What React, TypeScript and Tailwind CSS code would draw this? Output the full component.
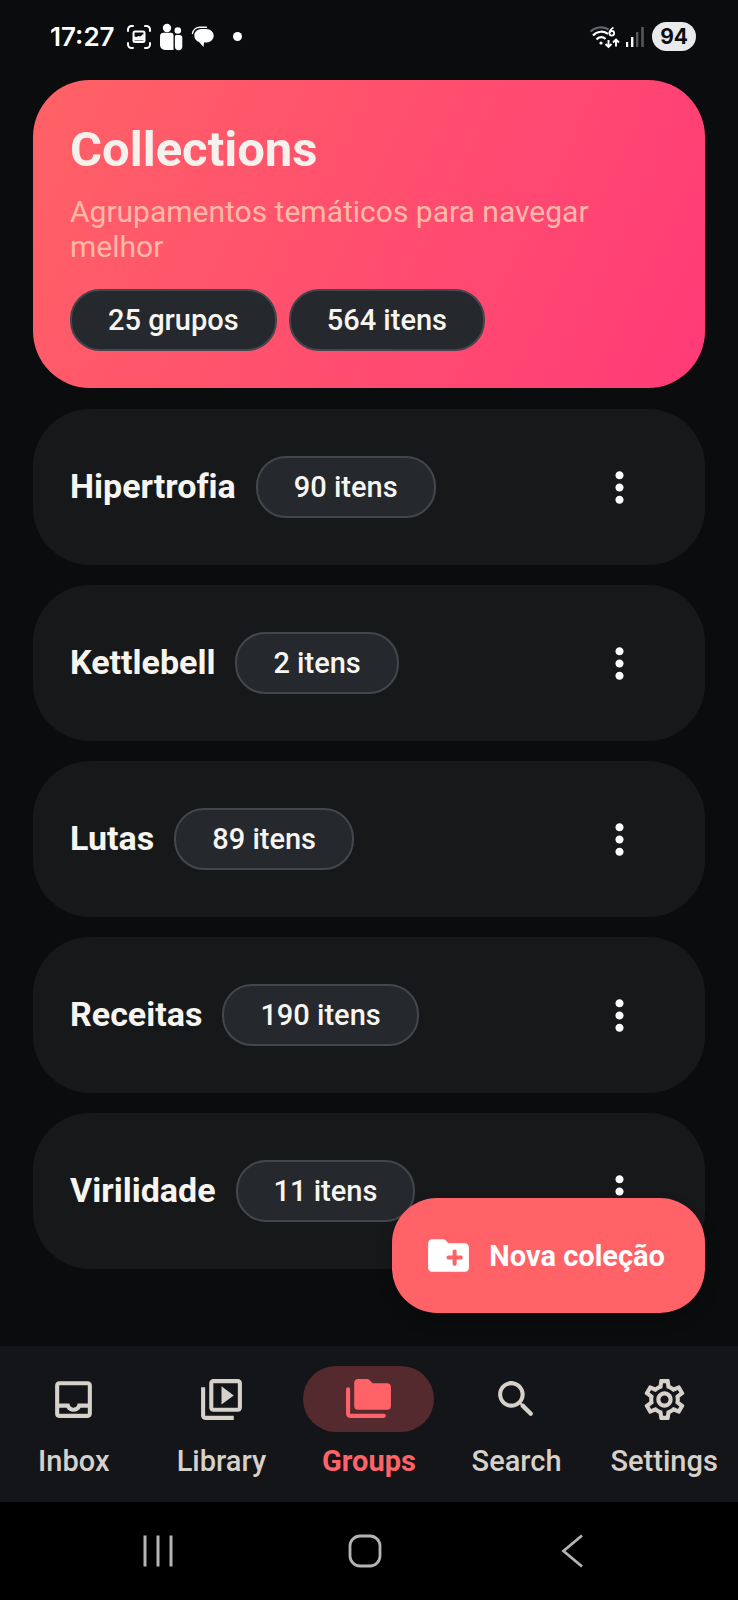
import type { ReactNode } from "react";
import { MdMoreVert, MdOutlineInbox, MdOutlineSettings, MdOutlineVideoLibrary } from "react-icons/md";

const collections = [
  { name: "Hipertrofia", count: 90 },
  { name: "Kettlebell", count: 2 },
  { name: "Lutas", count: 89 },
  { name: "Receitas", count: 190 },
  { name: "Virilidade", count: 11 },
];

function StatusBar() {
  return (
    <div className="flex h-20 items-center justify-between pr-[42px] pl-[50px] pb-[7px] font-['Inter','Roboto',sans-serif] text-white">
      <div className="flex items-center">
        <span className="text-[26px] leading-[30px] font-semibold">17:27</span>
        <svg className="ml-3 h-6 w-6" viewBox="0 0 24 24" fill="none" stroke="currentColor" strokeWidth="2" strokeLinecap="round">
          <path d="M1 6V4.500A3.500 3.500 0 0 1 4.500 1H6M18 1h1.500A3.500 3.500 0 0 1 23 4.500V6M23 18v1.500a3.500 3.500 0 0 1-3.500 3.500H18M6 23H4.500A3.500 3.500 0 0 1 1 19.500V18" />
          <rect x="6.500" y="6.500" width="11" height="10.500" rx="1.500" />
          <path d="M7 15.500v-4l2.500.5 2-1 2 .5 2.500-2.500 1 1v5.500Z" fill="currentColor" stroke="none" />
        </svg>
        <svg className="ml-2 h-7 w-6" viewBox="0 0 24 28" fill="currentColor">
          <circle cx="8" cy="5" r="4.200" />
          <circle cx="18.800" cy="7.500" r="3.300" />
          <path d="M4.500 9.800h7.500a2.500 2.500 0 0 1 2.500 2.500V27H6a5 5 0 0 1-5-5v-8.500a3.700 3.700 0 0 1 3.500-3.700Z" />
          <path d="M17 12h3.500a2.800 2.800 0 0 1 2.800 2.800v8.700a3.700 3.700 0 0 1-7.400 0V13Z" />
        </svg>
        <svg className="ml-2 h-6 w-6" viewBox="0 0 24 24" fill="currentColor">
          <path d="M11 4h4.500a7 6.500 0 0 1 0 13.500H13L12.500 22 8 17c-3-1-4.700-3.500-4.700-6.500 0-4 3.500-6.500 7.700-6.500Z" />
          <path d="M1.500 8.500C2 5 5 2.200 9 2.200h6.500" fill="none" stroke="currentColor" strokeWidth="1.400" strokeLinecap="round" />
        </svg>
        <span className="ml-[18px] h-[9px] w-[9px] rounded-full bg-white" />
      </div>
      <div className="flex items-center">
        <svg className="h-6 w-8" viewBox="0 0 32 24" fill="none" stroke="currentColor" strokeWidth="2.200">
          <path d="M1.500 6.500C6 2 14 1 19.500 4.500" stroke="#62656a" />
          <path d="M4 10.500c4-4.500 11-5 15-1.500M7.500 14.500c2.500-3 6.500-3 9-.5" />
          <circle cx="12" cy="18" r="1.600" fill="currentColor" stroke="none" />
          <path d="M24.500 2.500c-2.500 1.500-4 3.500-4 5.500" strokeWidth="1.800" />
          <circle cx="22.800" cy="8.300" r="2.300" strokeWidth="1.800" />
          <path d="M19.500 15v7M16.500 19l3 3 3-3M27 21.500v-7M24 17.500l3-3 3 3" strokeWidth="1.900" />
        </svg>
        <svg className="ml-1 h-6 w-5" viewBox="0 0 20 24">
          <path d="M1 17h2.200v5H1z" fill="#fff" />
          <path d="M6 12h2.400v10H6z" fill="#fff" />
          <path d="M11 7h2.400v15H11z" fill="#54575a" />
          <path d="M16.200 2h2.600v20h-2.600z" fill="#54575a" />
        </svg>
        <span className="ml-[7px] rounded-full bg-[#e9eaec] px-2 text-[21px] leading-[29px] font-bold text-[#0b0d0f]">94</span>
      </div>
    </div>
  );
}

function Chip({ children }: { children: ReactNode }) {
  return (
    <span className="flex h-[62px] shrink-0 items-center rounded-[30px] border-2 border-[#43474d] bg-[#25282d] px-9 text-[29px] leading-[34px] font-medium text-[#f7f5f0]">
      {children}
    </span>
  );
}

function CollectionCard({ name, count }: { name: string; count: number }) {
  return (
    <li className="flex items-center rounded-[57px] bg-[#17181a] px-[37px] py-[29px]">
      <h2 className="pb-[3px] text-[34px] leading-[40px] font-bold text-[#f7f5f0] [font-variant-ligatures:none]">{name}</h2>
      <div className="ml-5">
        <Chip>{count} itens</Chip>
      </div>
      <button type="button" aria-label={`Opções de ${name}`} className="ml-auto flex h-[98px] w-[98px] items-center justify-center text-white">
        <MdMoreVert className="h-[49px] w-[49px]" />
      </button>
    </li>
  );
}

function FoldersIcon() {
  return (
    <svg className="h-[49px] w-[49px]" viewBox="0 0 24 24" fill="currentColor">
      <path d="M2 6c-.55 0-1 .45-1 1v12c0 1.100.9 2 2 2h16.500a1 1 0 0 0 0-2H3V7c0-.55-.45-1-1-1Z" />
      <path d="M21 4h-7l-1.400-1.400A2 2 0 0 0 11.200 2H7a2 2 0 0 0-2 2v11.200a1.800 1.800 0 0 0 1.800 1.800h14.400a1.800 1.800 0 0 0 1.800-1.800V6a2 2 0 0 0-2-2Z" />
    </svg>
  );
}

function SearchIcon() {
  return (
    <svg className="h-[49px] w-[49px]" viewBox="0 0 24 24" fill="currentColor">
      <path d="M15.500 14h-.79l-.28-.27c1.200-1.400 1.820-3.310 1.480-5.340-.47-2.780-2.790-5-5.590-5.340-4.230-.52-7.790 3.040-7.270 7.270.34 2.800 2.560 5.120 5.340 5.590 2.030.34 3.940-.28 5.340-1.480l.27.28v.79l4.250 4.250c.41.41 1.080.41 1.490 0 .41-.41.41-1.080 0-1.490L15.500 14zm-6 0C7.010 14 5 11.990 5 9.500S7.010 5 9.500 5 14 7.010 14 9.500 11.990 14 9.500 14z" />
    </svg>
  );
}

function NewFolderIcon() {
  return (
    <svg className="h-[49px] w-[49px]" viewBox="0 0 24 24" fill="currentColor">
      <path d="M20 6h-8l-1.410-1.410C10.210 4.210 9.700 4 9.170 4H4c-1.110 0-1.990.89-1.990 2L2 18c0 1.110.89 2 2 2h16c1.110 0 2-.89 2-2V8c0-1.110-.89-2-2-2zm-2 8h-2v2c0 .55-.45 1-1 1s-1-.45-1-1v-2h-2c-.55 0-1-.45-1-1s.45-1 1-1h2v-2c0-.55.45-1 1-1s1 .45 1 1v2h2c.55 0 1 .45 1 1s-.45 1-1 1z" />
    </svg>
  );
}

const tabs = [
  { label: "Inbox", icon: <MdOutlineInbox className="h-[49px] w-[49px]" /> },
  { label: "Library", icon: <MdOutlineVideoLibrary className="h-[49px] w-[49px]" /> },
  { label: "Groups", icon: <FoldersIcon />, active: true },
  { label: "Search", icon: <SearchIcon /> },
  { label: "Settings", icon: <MdOutlineSettings className="h-[49px] w-[49px]" /> },
];

function TabBar() {
  return (
    <nav className="grid h-[156px] grid-cols-5 bg-[#141519] pt-5">
      {tabs.map((tab) => (
        <a
          key={tab.label}
          href={`#${tab.label.toLowerCase()}`}
          aria-current={tab.active ? "page" : undefined}
          className={tab.active ? "flex flex-col items-center font-bold text-[#ff6368]" : "flex flex-col items-center font-medium text-[#d6d1ca]"}
        >
          <span className={tab.active ? "flex h-[66px] w-[131px] items-center justify-center rounded-full bg-[#552a2f]" : "flex h-[66px] w-[131px] items-center justify-center"}>
            {tab.icon}
          </span>
          <span className="mt-3 text-[29px] leading-[34px]">{tab.label}</span>
        </a>
      ))}
    </nav>
  );
}

function SystemBar() {
  return (
    <div className="grid h-[98px] grid-cols-3 bg-black pr-[63px] pl-[55px] text-[#b4b4b4]">
      <button type="button" aria-label="Recentes" className="flex items-center justify-center">
        <svg className="h-9 w-9" viewBox="0 0 36 36" fill="none" stroke="currentColor" strokeWidth="3">
          <path d="M5 2.500v31M18 2.500v31M31 2.500v31" />
        </svg>
      </button>
      <button type="button" aria-label="Início" className="flex items-center justify-center">
        <svg className="h-9 w-9" viewBox="0 0 36 36" fill="none" stroke="currentColor" strokeWidth="2.800">
          <rect x="3" y="3" width="30" height="30" rx="10" />
        </svg>
      </button>
      <button type="button" aria-label="Voltar" className="flex items-center justify-center">
        <svg className="h-9 w-9" viewBox="0 0 36 36" fill="none" stroke="currentColor" strokeWidth="2.800">
          <path d="M28 2.500 9.500 18 28 33.500" />
        </svg>
      </button>
    </div>
  );
}

export default function App() {
  return (
    <div className="flex min-h-screen flex-col bg-[#0a0c0e] font-['Roboto',sans-serif]">
      <StatusBar />
      <main className="relative flex-1 px-[33px] pb-[75px]">
        <header className="rounded-[57px] bg-linear-[116deg,#ff6266,#ff3b77] p-[37px]">
          <h1 className="text-[49px] leading-[66px] font-bold text-[#f7f1ee]">Collections</h1>
          <p className="mt-[11px] text-[30px] leading-[35px] text-[#ffb9a8]">Agrupamentos temáticos para navegar melhor</p>
          <div className="mt-[25px] flex gap-3">
            <Chip>25 grupos</Chip>
            <Chip>564 itens</Chip>
          </div>
        </header>
        <ul className="mt-[21px] flex flex-col gap-5">
          {collections.map((item) => (
            <CollectionCard key={item.name} {...item} />
          ))}
        </ul>
        <button
          type="button"
          className="absolute right-[33px] bottom-[33px] flex h-[115px] items-center gap-4 rounded-[45px] bg-[#ff6368] pr-10 pl-8 text-[29px] leading-[34px] font-bold text-white shadow-[0_8px_16px_rgba(0,0,0,0.2)]"
        >
          <NewFolderIcon />
          Nova coleção
        </button>
      </main>
      <TabBar />
      <SystemBar />
    </div>
  );
}
